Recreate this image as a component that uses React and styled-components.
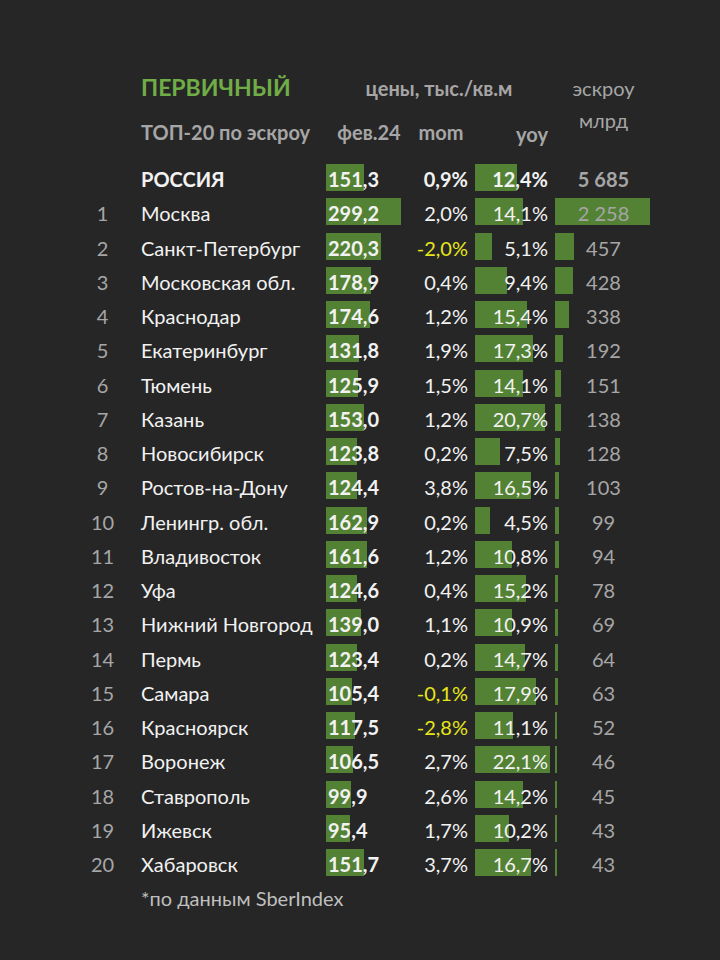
import React from 'react'
import styled, { createGlobalStyle } from 'styled-components'

const GlobalStyle = createGlobalStyle`
  html, body {
    margin: 0;
    padding: 0;
    background: #262626;
  }
  body {
    font-family: Lato, 'Open Sans', 'Noto Sans', sans-serif;
  }
`

const GREEN = '#548235'
const GRAY = '#a6a6a6'

const rows = [
  [1, 'Москва', '299,2', 299.2, '2,0%', '14,1%', 14.1, '2 258', 2258],
  [2, 'Санкт-Петербург', '220,3', 220.3, '-2,0%', '5,1%', 5.1, '457', 457],
  [3, 'Московская обл.', '178,9', 178.9, '0,4%', '9,4%', 9.4, '428', 428],
  [4, 'Краснодар', '174,6', 174.6, '1,2%', '15,4%', 15.4, '338', 338],
  [5, 'Екатеринбург', '131,8', 131.8, '1,9%', '17,3%', 17.3, '192', 192],
  [6, 'Тюмень', '125,9', 125.9, '1,5%', '14,1%', 14.1, '151', 151],
  [7, 'Казань', '153,0', 153.0, '1,2%', '20,7%', 20.7, '138', 138],
  [8, 'Новосибирск', '123,8', 123.8, '0,2%', '7,5%', 7.5, '128', 128],
  [9, 'Ростов-на-Дону', '124,4', 124.4, '3,8%', '16,5%', 16.5, '103', 103],
  [10, 'Ленингр. обл.', '162,9', 162.9, '0,2%', '4,5%', 4.5, '99', 99],
  [11, 'Владивосток', '161,6', 161.6, '1,2%', '10,8%', 10.8, '94', 94],
  [12, 'Уфа', '124,6', 124.6, '0,4%', '15,2%', 15.2, '78', 78],
  [13, 'Нижний Новгород', '139,0', 139.0, '1,1%', '10,9%', 10.9, '69', 69],
  [14, 'Пермь', '123,4', 123.4, '0,2%', '14,7%', 14.7, '64', 64],
  [15, 'Самара', '105,4', 105.4, '-0,1%', '17,9%', 17.9, '63', 63],
  [16, 'Красноярск', '117,5', 117.5, '-2,8%', '11,1%', 11.1, '52', 52],
  [17, 'Воронеж', '106,5', 106.5, '2,7%', '22,1%', 22.1, '46', 46],
  [18, 'Ставрополь', '99,9', 99.9, '2,6%', '14,2%', 14.2, '45', 45],
  [19, 'Ижевск', '95,4', 95.4, '1,7%', '10,2%', 10.2, '43', 43],
  [20, 'Хабаровск', '151,7', 151.7, '3,7%', '16,7%', 16.7, '43', 43]
]

const COLS = '35px 206px 86px 58px 82px 103px'

const Page = styled.div`
  min-height: 960px;
  box-sizing: border-box;
  padding: 70px 0 0 85px;
  background: #262626;
`

const Header = styled.div`
  display: grid;
  grid-template-columns: ${COLS};
  grid-template-rows: 34px 34px;
  row-gap: 11px;
  color: ${GRAY};
  font-size: 20px;
  font-weight: 700;
`

const HeadCell = styled.div`
  display: flex;
  align-items: center;
  justify-content: ${p => p.align || 'flex-start'};
  grid-column: ${p => p.col};
  grid-row: ${p => p.row};
  padding: ${p => p.pad || '0'};
  white-space: nowrap;
`

const Title = styled(HeadCell)`
  color: #70ad47;
  font-size: 23px;
  font-weight: 700;
`

const Escrow = styled.div`
  grid-column: 6;
  grid-row: 1 / span 2;
  padding-top: 2px;
  text-align: center;
  font-weight: 400;
  line-height: 32px;
  font-size: 20px;
`

const Table = styled.div`
  margin-top: 13px;
  display: grid;
  grid-template-columns: ${COLS};
  grid-auto-rows: 34.25px;
  font-size: 20px;
  color: #f2f2f2;
`

const Cell = styled.div`
  position: relative;
  display: flex;
  align-items: center;
  justify-content: ${p => p.align || 'flex-start'};
  padding: ${p => p.pad || '0'};
  white-space: nowrap;
  font-weight: ${p => (p.bold ? 700 : 400)};
  color: ${p => p.color || 'inherit'};
`

const Num = styled(Cell)`
  justify-content: center;
  color: ${GRAY};
`

const Bar = styled.div`
  position: absolute;
  top: 2px;
  height: 27px;
  left: ${p => p.left}px;
  background: ${GREEN};
`

const Value = styled.span`
  position: relative;
`

const Note = styled.div`
  grid-column: 2 / span 5;
  padding-left: 21px;
  display: flex;
  align-items: center;
  color: #bfbfbf;
`

const Row = ({ n, name, price, priceV, mom, yoy, yoyV, esc, escV, total }) => {
  const neg = mom.startsWith('-')
  return (
    <>
      <Num>{n}</Num>
      <Cell pad="0 0 0 21px" bold={total}>{name}</Cell>
      <Cell pad="0 0 0 2px" bold>
        <Bar left={0} style={{ width: priceV * 0.251 }} />
        <Value>{price}</Value>
      </Cell>
      <Cell align="flex-end" pad="0 2px 0 0" bold={total} color={neg ? '#e6e619' : undefined}>
        {mom}
      </Cell>
      <Cell align="flex-end" pad="0 4px 0 0" bold={total}>
        <Bar left={5} style={{ width: yoyV * 3.38 }} />
        <Value>{yoy}</Value>
      </Cell>
      <Cell align="center" bold={total} color={GRAY}>
        {escV != null && <Bar left={3} style={{ width: escV * 0.042 }} />}
        <Value>{esc}</Value>
      </Cell>
    </>
  )
}

export default function App() {
  return (
    <Page>
      <GlobalStyle />
      <Header>
        <Title col={2} row={1} pad="0 0 0 21px">ПЕРВИЧНЫЙ</Title>
        <HeadCell col="3 / span 3" row={1} align="center" pad="2px 0 0 0">
          цены, тыс./кв.м
        </HeadCell>
        <Escrow>
          эскроу
          <br />
          млрд
        </Escrow>
        <HeadCell col={2} row={2} pad="0 0 0 21px">ТОП-20 по эскроу</HeadCell>
        <HeadCell col={3} row={2} align="center">фев.24</HeadCell>
        <HeadCell col={4} row={2} align="center">mom</HeadCell>
        <HeadCell col={5} row={2} align="flex-end" pad="4px 4px 0 0">yoy</HeadCell>
      </Header>
      <Table>
        <Row
          n=""
          name="РОССИЯ"
          price="151,3"
          priceV={151.3}
          mom="0,9%"
          yoy="12,4%"
          yoyV={12.4}
          esc="5 685"
          escV={null}
          total
        />
        {rows.map(r => (
          <Row
            key={r[0]}
            n={r[0]}
            name={r[1]}
            price={r[2]}
            priceV={r[3]}
            mom={r[4]}
            yoy={r[5]}
            yoyV={r[6]}
            esc={r[7]}
            escV={r[8]}
          />
        ))}
        <Note>*по данным SberIndex</Note>
      </Table>
    </Page>
  )
}
